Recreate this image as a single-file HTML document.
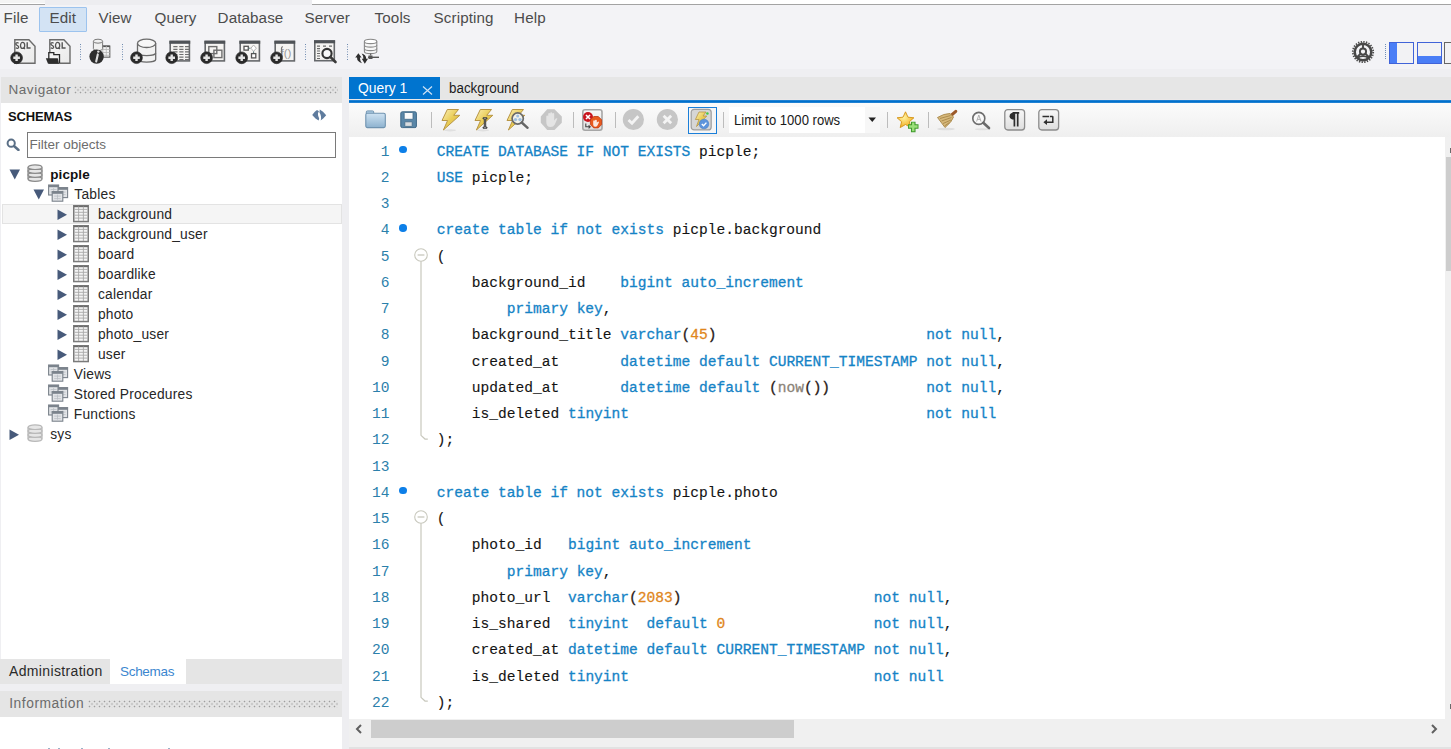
<!DOCTYPE html><html><head><meta charset="utf-8"><style>
html,body{margin:0;padding:0;width:1451px;height:749px;overflow:hidden;background:#f3f3f6;}
body{position:relative;font-family:"Liberation Sans", sans-serif;}
div,svg{position:absolute;}
.t{white-space:pre;}
</style></head><body>
<div style="left:0px;top:0px;width:1451px;height:5px;background:#ffffff"></div>
<div style="left:0px;top:0px;width:45px;height:3px;background:#f4f4f4"></div>
<div style="left:0px;top:4px;width:45px;height:1px;background:#a3a3a3"></div>
<div style="left:45px;top:0px;width:267px;height:5px;background:#ededf0"></div>
<div style="left:312px;top:4px;width:1139px;height:1px;background:#a3a3a3"></div>
<div style="left:0px;top:5px;width:1451px;height:64px;background:#f3f3f6"></div>
<div style="left:39px;top:7px;width:46px;height:23px;background:#d3e3f4;border:1px solid #9cc3ee;border-radius:1px"></div>
<div class="t" style="left:3.6px;top:9.24px;font-size:15.2px;line-height:17.48px;color:#4c4c4c;font-weight:400;letter-spacing:0.1px;font-family:'Liberation Sans', sans-serif;">File</div>
<div class="t" style="left:49.6px;top:9.24px;font-size:15.2px;line-height:17.48px;color:#4c4c4c;font-weight:400;letter-spacing:0.1px;font-family:'Liberation Sans', sans-serif;">Edit</div>
<div class="t" style="left:98.6px;top:9.24px;font-size:15.2px;line-height:17.48px;color:#4c4c4c;font-weight:400;letter-spacing:0.1px;font-family:'Liberation Sans', sans-serif;">View</div>
<div class="t" style="left:154.6px;top:9.24px;font-size:15.2px;line-height:17.48px;color:#4c4c4c;font-weight:400;letter-spacing:0.1px;font-family:'Liberation Sans', sans-serif;">Query</div>
<div class="t" style="left:217.6px;top:9.24px;font-size:15.2px;line-height:17.48px;color:#4c4c4c;font-weight:400;letter-spacing:0.1px;font-family:'Liberation Sans', sans-serif;">Database</div>
<div class="t" style="left:304.6px;top:9.24px;font-size:15.2px;line-height:17.48px;color:#4c4c4c;font-weight:400;letter-spacing:0.1px;font-family:'Liberation Sans', sans-serif;">Server</div>
<div class="t" style="left:374.6px;top:9.24px;font-size:15.2px;line-height:17.48px;color:#4c4c4c;font-weight:400;letter-spacing:0.1px;font-family:'Liberation Sans', sans-serif;">Tools</div>
<div class="t" style="left:433.6px;top:9.24px;font-size:15.2px;line-height:17.48px;color:#4c4c4c;font-weight:400;letter-spacing:0.1px;font-family:'Liberation Sans', sans-serif;">Scripting</div>
<div class="t" style="left:514.1px;top:9.24px;font-size:15.2px;line-height:17.48px;color:#4c4c4c;font-weight:400;letter-spacing:0.1px;font-family:'Liberation Sans', sans-serif;">Help</div>
<div style="left:0px;top:69px;width:1451px;height:8px;background:#efeff2"></div>
<div style="left:0px;top:77px;width:342px;height:26px;background:#e5e5e5"></div>
<div class="t" style="left:8.5px;top:81.78px;font-size:13.5px;line-height:15.52px;color:#6b6b6b;font-weight:400;letter-spacing:0.55px;font-family:'Liberation Sans', sans-serif;">Navigator</div>
<div style="left:74px;top:85.5px;width:264px;height:8px;background:radial-gradient(circle at 1.5px 1.5px,#9e9e9e 0.7px,transparent 1.1px) 0 0/5px 5px,radial-gradient(circle at 1.5px 1.5px,#9e9e9e 0.7px,transparent 1.1px) 2.5px 2.5px/5px 5px"></div>
<div style="left:0px;top:103px;width:342px;height:556px;background:#ffffff"></div>
<div class="t" style="left:8px;top:109.93px;font-size:13px;line-height:14.95px;color:#111;font-weight:700;letter-spacing:-0.15px;font-family:'Liberation Sans', sans-serif;">SCHEMAS</div>
<div style="left:27px;top:132px;width:307px;height:24px;border:1px solid #7a7a7a;background:#fff"></div>
<div class="t" style="left:29.4px;top:137.18px;font-size:13.5px;line-height:15.52px;color:#6d6d6d;font-weight:400;letter-spacing:0px;font-family:'Liberation Sans', sans-serif;">Filter objects</div>
<div style="left:342px;top:77px;width:7px;height:672px;background:#eeeef1"></div>
<div style="left:0px;top:77px;width:1px;height:672px;background:#efeff2"></div>
<div style="left:2px;top:204px;width:340px;height:20px;background:#f5f5f5;border:1px solid #e3e3e3;box-sizing:border-box"></div>
<svg style="left:9px;top:169px" width="12" height="11"><path d="M0.5 0.5 L11 0.5 L5.75 10.5 Z" fill="#475a7a"/></svg>
<svg style="left:27px;top:164px" width="16" height="18"><g fill="#e6e6e6" stroke="#8a8a8a" stroke-width="1.2"><rect x="1" y="3" width="14" height="12" rx="1"/><ellipse cx="8" cy="15" rx="7" ry="2.3"/><ellipse cx="8" cy="11" rx="7" ry="2.3"/><ellipse cx="8" cy="7" rx="7" ry="2.3"/><ellipse cx="8" cy="3.2" rx="7" ry="2.3"/></g></svg>
<div class="t" style="left:50.2px;top:166.78px;font-size:13.5px;line-height:15.52px;color:#111;font-weight:700;letter-spacing:0.1px;font-family:'Liberation Sans', sans-serif;">picple</div>
<svg style="left:33px;top:189px" width="12" height="11"><path d="M0.5 0.5 L11 0.5 L5.75 10.5 Z" fill="#475a7a"/></svg>
<svg style="left:48px;top:184px" width="21" height="19"><rect x="0.6" y="1" width="10" height="10" fill="#e2e4e7" stroke="#7b838c" stroke-width="1.1"/><rect x="0.6" y="1" width="10" height="2.2" fill="#7b838c"/><path d="M2.6 5.5h6M2.6 8h6M5.6 4v5.5" stroke="#b9bec4" stroke-width="0.8"/><rect x="10" y="3.6" width="9.6" height="10" fill="#e2e4e7" stroke="#7b838c" stroke-width="1.1"/><rect x="10" y="3.6" width="9.6" height="2.2" fill="#7b838c"/><path d="M12 8.1h5.6M12 10.6h5.6M14.8 6.6v5.5" stroke="#b9bec4" stroke-width="0.8"/><rect x="4.2" y="7.6" width="10.6" height="9.6" fill="#e2e4e7" stroke="#7b838c" stroke-width="1.1"/><rect x="4.2" y="7.6" width="10.6" height="2.2" fill="#7b838c"/><path d="M6.2 12.1h6.6M6.2 14.6h6.6M9.5 10.6v5.1" stroke="#b9bec4" stroke-width="0.8"/></svg>
<div class="t" style="left:74.3px;top:186.50px;font-size:13.8px;line-height:15.87px;color:#262626;font-weight:400;letter-spacing:0.22px;font-family:'Liberation Sans', sans-serif;">Tables</div>
<svg style="left:57px;top:208.5px" width="11" height="12"><path d="M0.5 0.5 L10 5.75 L0.5 11 Z" fill="#475a7a"/></svg>
<svg style="left:73px;top:204.5px" width="16" height="18"><rect x="0.75" y="0.75" width="14.5" height="15.8" fill="#f4f4f4" stroke="#7a7a7a" stroke-width="1.5"/><path d="M1 1.5h14" stroke="#6a6a6a" stroke-width="1.4"/><path d="M1.5 4.4h13M1.5 7.3h13M1.5 10.2h13M1.5 13.1h13M5.6 1.5v14.5M10.4 1.5v14.5" stroke="#a8a8a8" stroke-width="0.9"/></svg>
<div class="t" style="left:97.9px;top:206.50px;font-size:13.8px;line-height:15.87px;color:#262626;font-weight:400;letter-spacing:0.22px;font-family:'Liberation Sans', sans-serif;">background</div>
<svg style="left:57px;top:228.5px" width="11" height="12"><path d="M0.5 0.5 L10 5.75 L0.5 11 Z" fill="#475a7a"/></svg>
<svg style="left:73px;top:224.5px" width="16" height="18"><rect x="0.75" y="0.75" width="14.5" height="15.8" fill="#f4f4f4" stroke="#7a7a7a" stroke-width="1.5"/><path d="M1 1.5h14" stroke="#6a6a6a" stroke-width="1.4"/><path d="M1.5 4.4h13M1.5 7.3h13M1.5 10.2h13M1.5 13.1h13M5.6 1.5v14.5M10.4 1.5v14.5" stroke="#a8a8a8" stroke-width="0.9"/></svg>
<div class="t" style="left:97.9px;top:226.50px;font-size:13.8px;line-height:15.87px;color:#262626;font-weight:400;letter-spacing:0.22px;font-family:'Liberation Sans', sans-serif;">background_user</div>
<svg style="left:57px;top:248.5px" width="11" height="12"><path d="M0.5 0.5 L10 5.75 L0.5 11 Z" fill="#475a7a"/></svg>
<svg style="left:73px;top:244.5px" width="16" height="18"><rect x="0.75" y="0.75" width="14.5" height="15.8" fill="#f4f4f4" stroke="#7a7a7a" stroke-width="1.5"/><path d="M1 1.5h14" stroke="#6a6a6a" stroke-width="1.4"/><path d="M1.5 4.4h13M1.5 7.3h13M1.5 10.2h13M1.5 13.1h13M5.6 1.5v14.5M10.4 1.5v14.5" stroke="#a8a8a8" stroke-width="0.9"/></svg>
<div class="t" style="left:97.9px;top:246.50px;font-size:13.8px;line-height:15.87px;color:#262626;font-weight:400;letter-spacing:0.22px;font-family:'Liberation Sans', sans-serif;">board</div>
<svg style="left:57px;top:268.5px" width="11" height="12"><path d="M0.5 0.5 L10 5.75 L0.5 11 Z" fill="#475a7a"/></svg>
<svg style="left:73px;top:264.5px" width="16" height="18"><rect x="0.75" y="0.75" width="14.5" height="15.8" fill="#f4f4f4" stroke="#7a7a7a" stroke-width="1.5"/><path d="M1 1.5h14" stroke="#6a6a6a" stroke-width="1.4"/><path d="M1.5 4.4h13M1.5 7.3h13M1.5 10.2h13M1.5 13.1h13M5.6 1.5v14.5M10.4 1.5v14.5" stroke="#a8a8a8" stroke-width="0.9"/></svg>
<div class="t" style="left:97.9px;top:266.50px;font-size:13.8px;line-height:15.87px;color:#262626;font-weight:400;letter-spacing:0.22px;font-family:'Liberation Sans', sans-serif;">boardlike</div>
<svg style="left:57px;top:288.5px" width="11" height="12"><path d="M0.5 0.5 L10 5.75 L0.5 11 Z" fill="#475a7a"/></svg>
<svg style="left:73px;top:284.5px" width="16" height="18"><rect x="0.75" y="0.75" width="14.5" height="15.8" fill="#f4f4f4" stroke="#7a7a7a" stroke-width="1.5"/><path d="M1 1.5h14" stroke="#6a6a6a" stroke-width="1.4"/><path d="M1.5 4.4h13M1.5 7.3h13M1.5 10.2h13M1.5 13.1h13M5.6 1.5v14.5M10.4 1.5v14.5" stroke="#a8a8a8" stroke-width="0.9"/></svg>
<div class="t" style="left:97.9px;top:286.50px;font-size:13.8px;line-height:15.87px;color:#262626;font-weight:400;letter-spacing:0.22px;font-family:'Liberation Sans', sans-serif;">calendar</div>
<svg style="left:57px;top:308.5px" width="11" height="12"><path d="M0.5 0.5 L10 5.75 L0.5 11 Z" fill="#475a7a"/></svg>
<svg style="left:73px;top:304.5px" width="16" height="18"><rect x="0.75" y="0.75" width="14.5" height="15.8" fill="#f4f4f4" stroke="#7a7a7a" stroke-width="1.5"/><path d="M1 1.5h14" stroke="#6a6a6a" stroke-width="1.4"/><path d="M1.5 4.4h13M1.5 7.3h13M1.5 10.2h13M1.5 13.1h13M5.6 1.5v14.5M10.4 1.5v14.5" stroke="#a8a8a8" stroke-width="0.9"/></svg>
<div class="t" style="left:97.9px;top:306.50px;font-size:13.8px;line-height:15.87px;color:#262626;font-weight:400;letter-spacing:0.22px;font-family:'Liberation Sans', sans-serif;">photo</div>
<svg style="left:57px;top:328.5px" width="11" height="12"><path d="M0.5 0.5 L10 5.75 L0.5 11 Z" fill="#475a7a"/></svg>
<svg style="left:73px;top:324.5px" width="16" height="18"><rect x="0.75" y="0.75" width="14.5" height="15.8" fill="#f4f4f4" stroke="#7a7a7a" stroke-width="1.5"/><path d="M1 1.5h14" stroke="#6a6a6a" stroke-width="1.4"/><path d="M1.5 4.4h13M1.5 7.3h13M1.5 10.2h13M1.5 13.1h13M5.6 1.5v14.5M10.4 1.5v14.5" stroke="#a8a8a8" stroke-width="0.9"/></svg>
<div class="t" style="left:97.9px;top:326.50px;font-size:13.8px;line-height:15.87px;color:#262626;font-weight:400;letter-spacing:0.22px;font-family:'Liberation Sans', sans-serif;">photo_user</div>
<svg style="left:57px;top:348.5px" width="11" height="12"><path d="M0.5 0.5 L10 5.75 L0.5 11 Z" fill="#475a7a"/></svg>
<svg style="left:73px;top:344.5px" width="16" height="18"><rect x="0.75" y="0.75" width="14.5" height="15.8" fill="#f4f4f4" stroke="#7a7a7a" stroke-width="1.5"/><path d="M1 1.5h14" stroke="#6a6a6a" stroke-width="1.4"/><path d="M1.5 4.4h13M1.5 7.3h13M1.5 10.2h13M1.5 13.1h13M5.6 1.5v14.5M10.4 1.5v14.5" stroke="#a8a8a8" stroke-width="0.9"/></svg>
<div class="t" style="left:97.9px;top:346.50px;font-size:13.8px;line-height:15.87px;color:#262626;font-weight:400;letter-spacing:0.22px;font-family:'Liberation Sans', sans-serif;">user</div>
<svg style="left:48px;top:364px" width="21" height="19"><rect x="0.6" y="1" width="10" height="10" fill="#e2e4e7" stroke="#7b838c" stroke-width="1.1"/><rect x="0.6" y="1" width="10" height="2.2" fill="#7b838c"/><path d="M2.6 5.5h6M2.6 8h6M5.6 4v5.5" stroke="#b9bec4" stroke-width="0.8"/><rect x="10" y="3.6" width="9.6" height="10" fill="#e2e4e7" stroke="#7b838c" stroke-width="1.1"/><rect x="10" y="3.6" width="9.6" height="2.2" fill="#7b838c"/><path d="M12 8.1h5.6M12 10.6h5.6M14.8 6.6v5.5" stroke="#b9bec4" stroke-width="0.8"/><rect x="4.2" y="7.6" width="10.6" height="9.6" fill="#e2e4e7" stroke="#7b838c" stroke-width="1.1"/><rect x="4.2" y="7.6" width="10.6" height="2.2" fill="#7b838c"/><path d="M6.2 12.1h6.6M6.2 14.6h6.6M9.5 10.6v5.1" stroke="#b9bec4" stroke-width="0.8"/></svg>
<div class="t" style="left:73.8px;top:366.50px;font-size:13.8px;line-height:15.87px;color:#262626;font-weight:400;letter-spacing:0.22px;font-family:'Liberation Sans', sans-serif;">Views</div>
<svg style="left:48px;top:384px" width="21" height="19"><rect x="0.6" y="1" width="10" height="10" fill="#e2e4e7" stroke="#7b838c" stroke-width="1.1"/><rect x="0.6" y="1" width="10" height="2.2" fill="#7b838c"/><path d="M2.6 5.5h6M2.6 8h6M5.6 4v5.5" stroke="#b9bec4" stroke-width="0.8"/><rect x="10" y="3.6" width="9.6" height="10" fill="#e2e4e7" stroke="#7b838c" stroke-width="1.1"/><rect x="10" y="3.6" width="9.6" height="2.2" fill="#7b838c"/><path d="M12 8.1h5.6M12 10.6h5.6M14.8 6.6v5.5" stroke="#b9bec4" stroke-width="0.8"/><rect x="4.2" y="7.6" width="10.6" height="9.6" fill="#e2e4e7" stroke="#7b838c" stroke-width="1.1"/><rect x="4.2" y="7.6" width="10.6" height="2.2" fill="#7b838c"/><path d="M6.2 12.1h6.6M6.2 14.6h6.6M9.5 10.6v5.1" stroke="#b9bec4" stroke-width="0.8"/></svg>
<div class="t" style="left:73.8px;top:386.50px;font-size:13.8px;line-height:15.87px;color:#262626;font-weight:400;letter-spacing:0.22px;font-family:'Liberation Sans', sans-serif;">Stored Procedures</div>
<svg style="left:48px;top:404px" width="21" height="19"><rect x="0.6" y="1" width="10" height="10" fill="#e2e4e7" stroke="#7b838c" stroke-width="1.1"/><rect x="0.6" y="1" width="10" height="2.2" fill="#7b838c"/><path d="M2.6 5.5h6M2.6 8h6M5.6 4v5.5" stroke="#b9bec4" stroke-width="0.8"/><rect x="10" y="3.6" width="9.6" height="10" fill="#e2e4e7" stroke="#7b838c" stroke-width="1.1"/><rect x="10" y="3.6" width="9.6" height="2.2" fill="#7b838c"/><path d="M12 8.1h5.6M12 10.6h5.6M14.8 6.6v5.5" stroke="#b9bec4" stroke-width="0.8"/><rect x="4.2" y="7.6" width="10.6" height="9.6" fill="#e2e4e7" stroke="#7b838c" stroke-width="1.1"/><rect x="4.2" y="7.6" width="10.6" height="2.2" fill="#7b838c"/><path d="M6.2 12.1h6.6M6.2 14.6h6.6M9.5 10.6v5.1" stroke="#b9bec4" stroke-width="0.8"/></svg>
<div class="t" style="left:73.8px;top:406.50px;font-size:13.8px;line-height:15.87px;color:#262626;font-weight:400;letter-spacing:0.22px;font-family:'Liberation Sans', sans-serif;">Functions</div>
<svg style="left:9px;top:428.5px" width="11" height="12"><path d="M0.5 0.5 L10 5.75 L0.5 11 Z" fill="#475a7a"/></svg>
<svg style="left:27px;top:424px" width="16" height="18"><g fill="#e6e6e6" stroke="#b8b8b8" stroke-width="1.2"><rect x="1" y="3" width="14" height="12" rx="1"/><ellipse cx="8" cy="15" rx="7" ry="2.3"/><ellipse cx="8" cy="11" rx="7" ry="2.3"/><ellipse cx="8" cy="7" rx="7" ry="2.3"/><ellipse cx="8" cy="3.2" rx="7" ry="2.3"/></g></svg>
<div class="t" style="left:50.2px;top:426.50px;font-size:13.8px;line-height:15.87px;color:#262626;font-weight:400;letter-spacing:0.22px;font-family:'Liberation Sans', sans-serif;">sys</div>
<svg style="left:6px;top:138px" width="14" height="13"><circle cx="5.2" cy="5.2" r="3.6" fill="none" stroke="#5a6f86" stroke-width="2"/><path d="M8 8 L12.5 12" stroke="#5a6f86" stroke-width="2.4" stroke-linecap="round"/></svg>
<svg style="left:311px;top:109px" width="17" height="13"><path d="M6 1 L8 2.3 Q6.6 4 7 6 Q7.4 8 8.2 9.4 L7.6 11.6 L4.5 9.6 L1.2 6 L3.8 2.8 Z" fill="#5f7c9e"/><path d="M8.8 0.6 L12 2.8 L15.2 6.2 L12.2 9.6 L9.6 11.6 Q10.3 9.6 10 7.6 Q9.6 5.2 8.4 3.6 Z" fill="#5f7c9e"/></svg>
<div style="left:0px;top:659px;width:342px;height:25px;background:#e5e5e5"></div>
<div style="left:110px;top:659px;width:75.5px;height:25px;background:#ffffff"></div>
<div class="t" style="left:9px;top:663.32px;font-size:14px;line-height:16.1px;color:#2a2a2a;font-weight:400;letter-spacing:0.35px;font-family:'Liberation Sans', sans-serif;">Administration</div>
<div class="t" style="left:120px;top:663.78px;font-size:13.5px;line-height:15.52px;color:#3b86cf;font-weight:400;letter-spacing:-0.3px;font-family:'Liberation Sans', sans-serif;">Schemas</div>
<div style="left:0px;top:684px;width:342px;height:7px;background:#efeff2"></div>
<div style="left:0px;top:691px;width:342px;height:26px;background:#e5e5e5"></div>
<div class="t" style="left:9.2px;top:696.00px;font-size:13.8px;line-height:15.87px;color:#6b6b6b;font-weight:400;letter-spacing:0.55px;font-family:'Liberation Sans', sans-serif;">Information</div>
<div style="left:88px;top:699.5px;width:250px;height:8px;background:radial-gradient(circle at 1.5px 1.5px,#9e9e9e 0.7px,transparent 1.1px) 0 0/5px 5px,radial-gradient(circle at 1.5px 1.5px,#9e9e9e 0.7px,transparent 1.1px) 2.5px 2.5px/5px 5px"></div>
<div style="left:0px;top:717px;width:342px;height:32px;background:#ffffff"></div>
<div style="left:349px;top:77px;width:1102px;height:23px;background:#e6e6e6"></div>
<div style="left:349px;top:77px;width:91px;height:26px;background:#0074cf"></div>
<div style="left:349px;top:99px;width:1102px;height:1px;background:#ebe8e8"></div>
<div style="left:349px;top:100px;width:1102px;height:3px;background:linear-gradient(#3b8fd9,#0070cc 35%,#0070cc 65%,#3b8fd9)"></div>
<div class="t" style="left:358px;top:78.66px;font-size:15.4px;line-height:17.71px;color:#ffffff;font-weight:400;letter-spacing:0px;font-family:'Liberation Sans', sans-serif;transform:scaleX(0.9);transform-origin:0 0;">Query 1</div>
<svg style="left:422px;top:86px" width="11" height="9"><path d="M1 0.5 L10 8.5 M10 0.5 L1 8.5" stroke="#cfe3f5" stroke-width="1.2"/></svg>
<div class="t" style="left:449px;top:78.66px;font-size:15.4px;line-height:17.71px;color:#1c1c1c;font-weight:400;letter-spacing:0px;font-family:'Liberation Sans', sans-serif;transform:scaleX(0.87);transform-origin:0 0;">background</div>
<div style="left:349px;top:103px;width:1102px;height:34px;background:linear-gradient(#fbfbfb,#efefef)"></div>
<div style="left:349px;top:137px;width:1096px;height:582px;background:#ffffff"></div>
<div style="left:1445px;top:137px;width:6px;height:582px;background:#f0f0f0"></div>
<div style="left:1446px;top:157px;width:5px;height:114px;background:#cdcdcd"></div>
<div style="left:1449.5px;top:148px;width:1.5px;height:4.5px;background:#6a6a6a"></div>
<div style="left:1449.5px;top:704px;width:1.5px;height:5px;background:#6a6a6a"></div>
<div style="left:349px;top:719px;width:1102px;height:30px;background:#f0f0f0"></div>
<div style="left:371px;top:720px;width:423px;height:18px;background:#cdcdcd"></div>
<svg style="left:355px;top:724px" width="8" height="10"><path d="M6 1 L2 5 L6 9" fill="none" stroke="#606060" stroke-width="2"/></svg>
<svg style="left:1430px;top:724px" width="8" height="10"><path d="M2 1 L6 5 L2 9" fill="none" stroke="#606060" stroke-width="2"/></svg>
<div style="left:349px;top:747px;width:1102px;height:2px;background:#e2e2e2"></div>
<div class="t" style="left:330px;width:59.5px;text-align:right;top:138.54px;height:26.25px;line-height:26.25px;font-family:'Liberation Mono', monospace;font-size:14.57px;color:#2b80ab">1</div>
<div style="left:399.3px;top:145.70px;width:7.5px;height:7.5px;border-radius:50%;background:#0d7fe8"></div>
<div class="t" style="left:436.8px;top:138.54px;height:26.25px;line-height:26.25px;font-family:'Liberation Mono', monospace;font-size:14.57px;-webkit-text-stroke:0.3px currentColor"><span style="color:#1583c6;-webkit-text-stroke:0.3px #1583c6">CREATE DATABASE IF NOT EXISTS</span><span style="color:#141414;-webkit-text-stroke:0.12px #141414"> </span><span style="color:#141414;-webkit-text-stroke:0.12px #141414">picple;</span></div>
<div class="t" style="left:330px;width:59.5px;text-align:right;top:164.79px;height:26.25px;line-height:26.25px;font-family:'Liberation Mono', monospace;font-size:14.57px;color:#2b80ab">2</div>
<div class="t" style="left:436.8px;top:164.79px;height:26.25px;line-height:26.25px;font-family:'Liberation Mono', monospace;font-size:14.57px;-webkit-text-stroke:0.3px currentColor"><span style="color:#1583c6;-webkit-text-stroke:0.3px #1583c6">USE</span><span style="color:#141414;-webkit-text-stroke:0.12px #141414"> </span><span style="color:#141414;-webkit-text-stroke:0.12px #141414">picple;</span></div>
<div class="t" style="left:330px;width:59.5px;text-align:right;top:191.04px;height:26.25px;line-height:26.25px;font-family:'Liberation Mono', monospace;font-size:14.57px;color:#2b80ab">3</div>
<div class="t" style="left:436.8px;top:191.04px;height:26.25px;line-height:26.25px;font-family:'Liberation Mono', monospace;font-size:14.57px;-webkit-text-stroke:0.3px currentColor"></div>
<div class="t" style="left:330px;width:59.5px;text-align:right;top:217.29px;height:26.25px;line-height:26.25px;font-family:'Liberation Mono', monospace;font-size:14.57px;color:#2b80ab">4</div>
<div style="left:399.3px;top:224.45px;width:7.5px;height:7.5px;border-radius:50%;background:#0d7fe8"></div>
<div class="t" style="left:436.8px;top:217.29px;height:26.25px;line-height:26.25px;font-family:'Liberation Mono', monospace;font-size:14.57px;-webkit-text-stroke:0.3px currentColor"><span style="color:#1583c6;-webkit-text-stroke:0.3px #1583c6">create table if not exists</span><span style="color:#141414;-webkit-text-stroke:0.12px #141414"> </span><span style="color:#141414;-webkit-text-stroke:0.12px #141414">picple.background</span></div>
<div class="t" style="left:330px;width:59.5px;text-align:right;top:243.54px;height:26.25px;line-height:26.25px;font-family:'Liberation Mono', monospace;font-size:14.57px;color:#2b80ab">5</div>
<div class="t" style="left:436.8px;top:243.54px;height:26.25px;line-height:26.25px;font-family:'Liberation Mono', monospace;font-size:14.57px;-webkit-text-stroke:0.3px currentColor"><span style="color:#141414;-webkit-text-stroke:0.12px #141414">(</span></div>
<div class="t" style="left:330px;width:59.5px;text-align:right;top:269.79px;height:26.25px;line-height:26.25px;font-family:'Liberation Mono', monospace;font-size:14.57px;color:#2b80ab">6</div>
<div class="t" style="left:436.8px;top:269.79px;height:26.25px;line-height:26.25px;font-family:'Liberation Mono', monospace;font-size:14.57px;-webkit-text-stroke:0.3px currentColor"><span style="color:#141414;-webkit-text-stroke:0.12px #141414">    </span><span style="color:#141414;-webkit-text-stroke:0.12px #141414">background_id</span><span style="color:#141414;-webkit-text-stroke:0.12px #141414">    </span><span style="color:#1583c6;-webkit-text-stroke:0.3px #1583c6">bigint auto_increment</span></div>
<div class="t" style="left:330px;width:59.5px;text-align:right;top:296.04px;height:26.25px;line-height:26.25px;font-family:'Liberation Mono', monospace;font-size:14.57px;color:#2b80ab">7</div>
<div class="t" style="left:436.8px;top:296.04px;height:26.25px;line-height:26.25px;font-family:'Liberation Mono', monospace;font-size:14.57px;-webkit-text-stroke:0.3px currentColor"><span style="color:#141414;-webkit-text-stroke:0.12px #141414">        </span><span style="color:#1583c6;-webkit-text-stroke:0.3px #1583c6">primary key</span><span style="color:#141414;-webkit-text-stroke:0.12px #141414">,</span></div>
<div class="t" style="left:330px;width:59.5px;text-align:right;top:322.29px;height:26.25px;line-height:26.25px;font-family:'Liberation Mono', monospace;font-size:14.57px;color:#2b80ab">8</div>
<div class="t" style="left:436.8px;top:322.29px;height:26.25px;line-height:26.25px;font-family:'Liberation Mono', monospace;font-size:14.57px;-webkit-text-stroke:0.3px currentColor"><span style="color:#141414;-webkit-text-stroke:0.12px #141414">    </span><span style="color:#141414;-webkit-text-stroke:0.12px #141414">background_title</span><span style="color:#141414;-webkit-text-stroke:0.12px #141414"> </span><span style="color:#1583c6;-webkit-text-stroke:0.3px #1583c6">varchar</span><span style="color:#2a2018;-webkit-text-stroke:0.3px #2a2018">(</span><span style="color:#e0861b;-webkit-text-stroke:0.3px #e0861b">45</span><span style="color:#2a2018;-webkit-text-stroke:0.3px #2a2018">)</span><span style="color:#141414;-webkit-text-stroke:0.12px #141414">                        </span><span style="color:#1583c6;-webkit-text-stroke:0.3px #1583c6">not null</span><span style="color:#141414;-webkit-text-stroke:0.12px #141414">,</span></div>
<div class="t" style="left:330px;width:59.5px;text-align:right;top:348.54px;height:26.25px;line-height:26.25px;font-family:'Liberation Mono', monospace;font-size:14.57px;color:#2b80ab">9</div>
<div class="t" style="left:436.8px;top:348.54px;height:26.25px;line-height:26.25px;font-family:'Liberation Mono', monospace;font-size:14.57px;-webkit-text-stroke:0.3px currentColor"><span style="color:#141414;-webkit-text-stroke:0.12px #141414">    </span><span style="color:#141414;-webkit-text-stroke:0.12px #141414">created_at</span><span style="color:#141414;-webkit-text-stroke:0.12px #141414">       </span><span style="color:#1583c6;-webkit-text-stroke:0.3px #1583c6">datetime default CURRENT_TIMESTAMP not null</span><span style="color:#141414;-webkit-text-stroke:0.12px #141414">,</span></div>
<div class="t" style="left:330px;width:59.5px;text-align:right;top:374.79px;height:26.25px;line-height:26.25px;font-family:'Liberation Mono', monospace;font-size:14.57px;color:#2b80ab">10</div>
<div class="t" style="left:436.8px;top:374.79px;height:26.25px;line-height:26.25px;font-family:'Liberation Mono', monospace;font-size:14.57px;-webkit-text-stroke:0.3px currentColor"><span style="color:#141414;-webkit-text-stroke:0.12px #141414">    </span><span style="color:#141414;-webkit-text-stroke:0.12px #141414">updated_at</span><span style="color:#141414;-webkit-text-stroke:0.12px #141414">       </span><span style="color:#1583c6;-webkit-text-stroke:0.3px #1583c6">datetime default</span><span style="color:#141414;-webkit-text-stroke:0.12px #141414"> </span><span style="color:#2a2018;-webkit-text-stroke:0.3px #2a2018">(</span><span style="color:#8c8478;-webkit-text-stroke:0.3px #8c8478">now</span><span style="color:#2a2018;-webkit-text-stroke:0.3px #2a2018">())</span><span style="color:#141414;-webkit-text-stroke:0.12px #141414">           </span><span style="color:#1583c6;-webkit-text-stroke:0.3px #1583c6">not null</span><span style="color:#141414;-webkit-text-stroke:0.12px #141414">,</span></div>
<div class="t" style="left:330px;width:59.5px;text-align:right;top:401.04px;height:26.25px;line-height:26.25px;font-family:'Liberation Mono', monospace;font-size:14.57px;color:#2b80ab">11</div>
<div class="t" style="left:436.8px;top:401.04px;height:26.25px;line-height:26.25px;font-family:'Liberation Mono', monospace;font-size:14.57px;-webkit-text-stroke:0.3px currentColor"><span style="color:#141414;-webkit-text-stroke:0.12px #141414">    </span><span style="color:#141414;-webkit-text-stroke:0.12px #141414">is_deleted</span><span style="color:#141414;-webkit-text-stroke:0.12px #141414"> </span><span style="color:#1583c6;-webkit-text-stroke:0.3px #1583c6">tinyint</span><span style="color:#141414;-webkit-text-stroke:0.12px #141414">                                  </span><span style="color:#1583c6;-webkit-text-stroke:0.3px #1583c6">not null</span></div>
<div class="t" style="left:330px;width:59.5px;text-align:right;top:427.29px;height:26.25px;line-height:26.25px;font-family:'Liberation Mono', monospace;font-size:14.57px;color:#2b80ab">12</div>
<div class="t" style="left:436.8px;top:427.29px;height:26.25px;line-height:26.25px;font-family:'Liberation Mono', monospace;font-size:14.57px;-webkit-text-stroke:0.3px currentColor"><span style="color:#141414;-webkit-text-stroke:0.12px #141414">);</span></div>
<div class="t" style="left:330px;width:59.5px;text-align:right;top:453.54px;height:26.25px;line-height:26.25px;font-family:'Liberation Mono', monospace;font-size:14.57px;color:#2b80ab">13</div>
<div class="t" style="left:436.8px;top:453.54px;height:26.25px;line-height:26.25px;font-family:'Liberation Mono', monospace;font-size:14.57px;-webkit-text-stroke:0.3px currentColor"></div>
<div class="t" style="left:330px;width:59.5px;text-align:right;top:479.79px;height:26.25px;line-height:26.25px;font-family:'Liberation Mono', monospace;font-size:14.57px;color:#2b80ab">14</div>
<div style="left:399.3px;top:486.95px;width:7.5px;height:7.5px;border-radius:50%;background:#0d7fe8"></div>
<div class="t" style="left:436.8px;top:479.79px;height:26.25px;line-height:26.25px;font-family:'Liberation Mono', monospace;font-size:14.57px;-webkit-text-stroke:0.3px currentColor"><span style="color:#1583c6;-webkit-text-stroke:0.3px #1583c6">create table if not exists</span><span style="color:#141414;-webkit-text-stroke:0.12px #141414"> </span><span style="color:#141414;-webkit-text-stroke:0.12px #141414">picple.photo</span></div>
<div class="t" style="left:330px;width:59.5px;text-align:right;top:506.04px;height:26.25px;line-height:26.25px;font-family:'Liberation Mono', monospace;font-size:14.57px;color:#2b80ab">15</div>
<div class="t" style="left:436.8px;top:506.04px;height:26.25px;line-height:26.25px;font-family:'Liberation Mono', monospace;font-size:14.57px;-webkit-text-stroke:0.3px currentColor"><span style="color:#141414;-webkit-text-stroke:0.12px #141414">(</span></div>
<div class="t" style="left:330px;width:59.5px;text-align:right;top:532.29px;height:26.25px;line-height:26.25px;font-family:'Liberation Mono', monospace;font-size:14.57px;color:#2b80ab">16</div>
<div class="t" style="left:436.8px;top:532.29px;height:26.25px;line-height:26.25px;font-family:'Liberation Mono', monospace;font-size:14.57px;-webkit-text-stroke:0.3px currentColor"><span style="color:#141414;-webkit-text-stroke:0.12px #141414">    </span><span style="color:#141414;-webkit-text-stroke:0.12px #141414">photo_id</span><span style="color:#141414;-webkit-text-stroke:0.12px #141414">   </span><span style="color:#1583c6;-webkit-text-stroke:0.3px #1583c6">bigint auto_increment</span></div>
<div class="t" style="left:330px;width:59.5px;text-align:right;top:558.54px;height:26.25px;line-height:26.25px;font-family:'Liberation Mono', monospace;font-size:14.57px;color:#2b80ab">17</div>
<div class="t" style="left:436.8px;top:558.54px;height:26.25px;line-height:26.25px;font-family:'Liberation Mono', monospace;font-size:14.57px;-webkit-text-stroke:0.3px currentColor"><span style="color:#141414;-webkit-text-stroke:0.12px #141414">        </span><span style="color:#1583c6;-webkit-text-stroke:0.3px #1583c6">primary key</span><span style="color:#141414;-webkit-text-stroke:0.12px #141414">,</span></div>
<div class="t" style="left:330px;width:59.5px;text-align:right;top:584.79px;height:26.25px;line-height:26.25px;font-family:'Liberation Mono', monospace;font-size:14.57px;color:#2b80ab">18</div>
<div class="t" style="left:436.8px;top:584.79px;height:26.25px;line-height:26.25px;font-family:'Liberation Mono', monospace;font-size:14.57px;-webkit-text-stroke:0.3px currentColor"><span style="color:#141414;-webkit-text-stroke:0.12px #141414">    </span><span style="color:#141414;-webkit-text-stroke:0.12px #141414">photo_url</span><span style="color:#141414;-webkit-text-stroke:0.12px #141414">  </span><span style="color:#1583c6;-webkit-text-stroke:0.3px #1583c6">varchar</span><span style="color:#2a2018;-webkit-text-stroke:0.3px #2a2018">(</span><span style="color:#e0861b;-webkit-text-stroke:0.3px #e0861b">2083</span><span style="color:#2a2018;-webkit-text-stroke:0.3px #2a2018">)</span><span style="color:#141414;-webkit-text-stroke:0.12px #141414">                      </span><span style="color:#1583c6;-webkit-text-stroke:0.3px #1583c6">not null</span><span style="color:#141414;-webkit-text-stroke:0.12px #141414">,</span></div>
<div class="t" style="left:330px;width:59.5px;text-align:right;top:611.04px;height:26.25px;line-height:26.25px;font-family:'Liberation Mono', monospace;font-size:14.57px;color:#2b80ab">19</div>
<div class="t" style="left:436.8px;top:611.04px;height:26.25px;line-height:26.25px;font-family:'Liberation Mono', monospace;font-size:14.57px;-webkit-text-stroke:0.3px currentColor"><span style="color:#141414;-webkit-text-stroke:0.12px #141414">    </span><span style="color:#141414;-webkit-text-stroke:0.12px #141414">is_shared</span><span style="color:#141414;-webkit-text-stroke:0.12px #141414">  </span><span style="color:#1583c6;-webkit-text-stroke:0.3px #1583c6">tinyint  default</span><span style="color:#141414;-webkit-text-stroke:0.12px #141414"> </span><span style="color:#e0861b;-webkit-text-stroke:0.3px #e0861b">0</span><span style="color:#141414;-webkit-text-stroke:0.12px #141414">                 </span><span style="color:#1583c6;-webkit-text-stroke:0.3px #1583c6">not null</span><span style="color:#141414;-webkit-text-stroke:0.12px #141414">,</span></div>
<div class="t" style="left:330px;width:59.5px;text-align:right;top:637.29px;height:26.25px;line-height:26.25px;font-family:'Liberation Mono', monospace;font-size:14.57px;color:#2b80ab">20</div>
<div class="t" style="left:436.8px;top:637.29px;height:26.25px;line-height:26.25px;font-family:'Liberation Mono', monospace;font-size:14.57px;-webkit-text-stroke:0.3px currentColor"><span style="color:#141414;-webkit-text-stroke:0.12px #141414">    </span><span style="color:#141414;-webkit-text-stroke:0.12px #141414">created_at</span><span style="color:#141414;-webkit-text-stroke:0.12px #141414"> </span><span style="color:#1583c6;-webkit-text-stroke:0.3px #1583c6">datetime default CURRENT_TIMESTAMP not null</span><span style="color:#141414;-webkit-text-stroke:0.12px #141414">,</span></div>
<div class="t" style="left:330px;width:59.5px;text-align:right;top:663.54px;height:26.25px;line-height:26.25px;font-family:'Liberation Mono', monospace;font-size:14.57px;color:#2b80ab">21</div>
<div class="t" style="left:436.8px;top:663.54px;height:26.25px;line-height:26.25px;font-family:'Liberation Mono', monospace;font-size:14.57px;-webkit-text-stroke:0.3px currentColor"><span style="color:#141414;-webkit-text-stroke:0.12px #141414">    </span><span style="color:#141414;-webkit-text-stroke:0.12px #141414">is_deleted</span><span style="color:#141414;-webkit-text-stroke:0.12px #141414"> </span><span style="color:#1583c6;-webkit-text-stroke:0.3px #1583c6">tinyint</span><span style="color:#141414;-webkit-text-stroke:0.12px #141414">                            </span><span style="color:#1583c6;-webkit-text-stroke:0.3px #1583c6">not null</span></div>
<div class="t" style="left:330px;width:59.5px;text-align:right;top:689.79px;height:26.25px;line-height:26.25px;font-family:'Liberation Mono', monospace;font-size:14.57px;color:#2b80ab">22</div>
<div class="t" style="left:436.8px;top:689.79px;height:26.25px;line-height:26.25px;font-family:'Liberation Mono', monospace;font-size:14.57px;-webkit-text-stroke:0.3px currentColor"><span style="color:#141414;-webkit-text-stroke:0.12px #141414">);</span></div>
<svg style="left:413px;top:246.70px" width="16" height="195.05"><circle cx="8" cy="8" r="6.3" fill="#fff" stroke="#c8c8bd" stroke-width="1.1"/><path d="M4.6 8h6.8" stroke="#c8c8bd" stroke-width="1.3"/><path d="M8 14.3 V188.35 L12 192.05 H14.8" fill="none" stroke="#c8c8bd" stroke-width="1.2"/></svg>
<svg style="left:413px;top:509.20px" width="16" height="195.05"><circle cx="8" cy="8" r="6.3" fill="#fff" stroke="#c8c8bd" stroke-width="1.1"/><path d="M4.6 8h6.8" stroke="#c8c8bd" stroke-width="1.3"/><path d="M8 14.3 V188.35 L12 192.05 H14.8" fill="none" stroke="#c8c8bd" stroke-width="1.2"/></svg>
<svg style="left:0;top:0" width="0" height="0"><defs><linearGradient id="dg" x1="0" y1="0" x2="1" y2="1"><stop offset="0" stop-color="#f7f7f7"/><stop offset="1" stop-color="#e9e9e9"/></linearGradient></defs></svg>
<svg style="left:10px;top:38px" width="27" height="28" viewBox="0 0 27 28"><path d="M4.8 1.8 H18.9 L25 8.2 V25.3 H4.8 Z" fill="url(#dg)" stroke="#6b6b6b" stroke-width="1.4"/><path d="M8.6 5.2 Q7.2 4.2 6.2 5 Q5.3 6 6.6 7 L8 8 Q9.2 9.1 8.2 10 Q7.2 10.8 5.8 9.8" fill="none" stroke="#555" stroke-width="1.3"/><ellipse cx="12.6" cy="7.4" rx="2.1" ry="3" fill="none" stroke="#555" stroke-width="1.3"/><path d="M13.5 9.6 L15 11" stroke="#555" stroke-width="1.2"/><path d="M17.2 4.2 V10 H20.6" fill="none" stroke="#555" stroke-width="1.4"/><circle cx="6.6" cy="19.8" r="5.9" fill="#2b2b2b" stroke="#202020" stroke-width="0.6"/><path d="M3.3 19.8h6.6M6.6 16.5v6.6" stroke="#e4e4e4" stroke-width="2.4"/></svg>
<svg style="left:45px;top:38px" width="27" height="28" viewBox="0 0 27 28"><path d="M4.8 1.8 H18.9 L25 8.2 V25.3 H4.8 Z" fill="url(#dg)" stroke="#6b6b6b" stroke-width="1.4"/><path d="M8.6 5.2 Q7.2 4.2 6.2 5 Q5.3 6 6.6 7 L8 8 Q9.2 9.1 8.2 10 Q7.2 10.8 5.8 9.8" fill="none" stroke="#555" stroke-width="1.3"/><ellipse cx="12.6" cy="7.4" rx="2.1" ry="3" fill="none" stroke="#555" stroke-width="1.3"/><path d="M13.5 9.6 L15 11" stroke="#555" stroke-width="1.2"/><path d="M17.2 4.2 V10 H20.6" fill="none" stroke="#555" stroke-width="1.4"/><path d="M3.8 25 V14.6 H8.8 V16.6 H14.5 V25" fill="#f4f4f4" stroke="#2a2a2a" stroke-width="1.3"/><path d="M0.8 20.3 H12.8 L14 25.8 H3 Z" fill="#2e2e2e"/></svg>
<div style="left:79.5px;top:44px;width:1.3px;height:16px;background-image:linear-gradient(#5f7fa8 50%,transparent 50%);background-size:1px 2.5px"></div>
<svg style="left:88px;top:38px" width="24" height="28" viewBox="0 0 24 28"><rect x="10.9" y="8.1" width="10.9" height="11.1" fill="#f2f2f2" stroke="#6d6d6d" stroke-width="1.2"/><path d="M11 8.3h10.8" stroke="#555" stroke-width="1.6"/><path d="M11 11.5h10.8M11 14.5h10.8M11 17.3h10.8M14.8 8v11M18.3 8v11" stroke="#b5b5b5" stroke-width="0.8"/><g fill="#f0f0f0" stroke="#7a7a7a" stroke-width="1"><path d="M5.4 3.2 v7.5 a4.6 2 0 0 0 9.2 0 v-7.5"/><ellipse cx="10" cy="3.2" rx="4.6" ry="2"/></g><circle cx="8.6" cy="18.6" r="7.2" fill="#2e2e2e"/><circle cx="10.3" cy="13.6" r="1.2" fill="#e0e0e0"/><path d="M9.8 16.4 L8.2 23.5" stroke="#e0e0e0" stroke-width="2.1" stroke-linecap="round"/></svg>
<div style="left:122px;top:44px;width:1.3px;height:16px;background-image:linear-gradient(#5f7fa8 50%,transparent 50%);background-size:1px 2.5px"></div>
<svg style="left:129px;top:38px" width="28" height="28" viewBox="0 0 28 28"><g fill="#f2f2f2" stroke="#6a6a6a" stroke-width="1.3"><path d="M8.5 5.3 v16.2 a9.1 2.6 0 0 0 18.2 0 v-16.2"/><path d="M8.5 15 a9.1 2.6 0 0 0 18.2 0" fill="none"/><ellipse cx="17.6" cy="5.3" rx="9.1" ry="4.2" fill="#f7f7f7"/></g><circle cx="7.5" cy="19.7" r="5.9" fill="#2b2b2b" stroke="#202020" stroke-width="0.6"/><path d="M4.2 19.7h6.6M7.5 16.4v6.6" stroke="#e4e4e4" stroke-width="2.4"/></svg>
<svg style="left:164px;top:38px" width="28" height="28" viewBox="0 0 28 28"><rect x="6.2" y="3.5" width="19.2" height="19.4" fill="#f5f4f2" stroke="#66696c" stroke-width="1.6"/><rect x="5.4" y="2.7" width="20.8" height="3.1" fill="#4f5357"/><path d="M9.3 8.6h4.2M9.3 11.3h4.2M9.3 13.9h4.2M9.3 16.5h4.2M9.3 19.2h4.2M9.3 21.5h4.2M15.3 8.6h4.2M15.3 11.3h4.2M15.3 13.9h4.2M15.3 16.5h4.2M15.3 19.2h4.2M15.3 21.5h4.2M21.0 8.6h4.2M21.0 11.3h4.2M21.0 13.9h4.2M21.0 16.5h4.2M21.0 19.2h4.2M21.0 21.5h4.2" stroke="#707070" stroke-width="1.2"/><circle cx="7.7" cy="19.7" r="5.9" fill="#2b2b2b" stroke="#202020" stroke-width="0.6"/><path d="M4.4 19.7h6.6M7.7 16.4v6.6" stroke="#e4e4e4" stroke-width="2.4"/></svg>
<svg style="left:199px;top:38px" width="28" height="28" viewBox="0 0 28 28"><rect x="6.2" y="3.5" width="19.2" height="19.4" fill="#f5f4f2" stroke="#66696c" stroke-width="1.6"/><rect x="5.4" y="2.7" width="20.8" height="3.1" fill="#4f5357"/><rect x="9.8" y="8.6" width="8" height="7" fill="none" stroke="#6e6e6e" stroke-width="1.4"/><rect x="14.9" y="12.2" width="8" height="7.4" fill="none" stroke="#6e6e6e" stroke-width="1.4"/><circle cx="7.6" cy="19.7" r="5.9" fill="#2b2b2b" stroke="#202020" stroke-width="0.6"/><path d="M4.3 19.7h6.6M7.6 16.4v6.6" stroke="#e4e4e4" stroke-width="2.4"/></svg>
<svg style="left:234px;top:38px" width="28" height="28" viewBox="0 0 28 28"><rect x="6.2" y="3.5" width="19.2" height="19.4" fill="#f5f4f2" stroke="#66696c" stroke-width="1.6"/><rect x="5.4" y="2.7" width="20.8" height="3.1" fill="#4f5357"/><rect x="10" y="8.3" width="4.3" height="3.8" fill="#fff" stroke="#555" stroke-width="1.3"/><path d="M14.3 10.2h2.2" stroke="#5a7a7a" stroke-width="1"/><path d="M19.6 7 l2.7 3.2 -2.7 3.2 -2.7 -3.2 z" fill="#fff" stroke="#aaa" stroke-width="0.9"/><path d="M19.6 13.4v2.2" stroke="#5a7a7a" stroke-width="1"/><rect x="17.5" y="15.6" width="4.3" height="4.3" fill="#fff" stroke="#555" stroke-width="1.3"/><circle cx="7.7" cy="19.8" r="5.9" fill="#2b2b2b" stroke="#202020" stroke-width="0.6"/><path d="M4.4 19.8h6.6M7.7 16.5v6.6" stroke="#e4e4e4" stroke-width="2.4"/></svg>
<svg style="left:269px;top:38px" width="28" height="28" viewBox="0 0 28 28"><rect x="6.2" y="3.5" width="19.2" height="19.4" fill="#f5f4f2" stroke="#66696c" stroke-width="1.6"/><rect x="5.4" y="2.7" width="20.8" height="3.1" fill="#4f5357"/><text x="11.4" y="19" font-family="Liberation Sans" font-size="11.5" fill="#9a9a9a" textLength="11" lengthAdjust="spacingAndGlyphs">f()</text><path d="M13.9 8.8 Q12.7 8.5 12.5 10.4 V19" fill="none" stroke="#777" stroke-width="1.2"/><circle cx="7.6" cy="19.8" r="5.9" fill="#2b2b2b" stroke="#202020" stroke-width="0.6"/><path d="M4.3 19.8h6.6M7.6 16.5v6.6" stroke="#e4e4e4" stroke-width="2.4"/></svg>
<div style="left:304.5px;top:44px;width:1.3px;height:16px;background-image:linear-gradient(#5f7fa8 50%,transparent 50%);background-size:1px 2.5px"></div>
<svg style="left:312px;top:38px" width="28" height="28" viewBox="0 0 28 28"><rect x="2.8" y="3.2" width="19.5" height="19.5" fill="#f5f4f2" stroke="#66696c" stroke-width="1.6"/><rect x="2" y="2.2" width="21.1" height="3.1" fill="#4f5357"/><path d="M5 8.2h3M11 8.2h3M17 8.2h3M5 10.6h3M5 13h3M5 15.5h3M5 18h3M5 20.5h3" stroke="#6a6a6a" stroke-width="1.2"/><circle cx="15" cy="15.5" r="4.6" fill="#f8f8f8" stroke="#333" stroke-width="2.1"/><path d="M18.3 18.8 L23.5 24" stroke="#3a3a3a" stroke-width="2.6" stroke-linecap="round"/></svg>
<div style="left:346.5px;top:44px;width:1.3px;height:16px;background-image:linear-gradient(#5f7fa8 50%,transparent 50%);background-size:1px 2.5px"></div>
<svg style="left:353px;top:38px" width="27" height="28" viewBox="0 0 27 28"><g fill="#f6f6f6" stroke="#8a8a8a" stroke-width="1.1"><path d="M11.4 3.4 v10 a6.2 2.2 0 0 0 12.4 0 v-10"/><path d="M11.4 6.9 a6.2 2.2 0 0 0 12.4 0M11.4 10.4 a6.2 2.2 0 0 0 12.4 0" fill="none"/><ellipse cx="17.6" cy="3.4" rx="6.2" ry="2.2" fill="#fff"/></g><path d="M15 19.3 H26" stroke="#555" stroke-width="1.4"/><path d="M15.5 17.5 h4 v3.5 h-4z" fill="#555"/><path d="M17.6 15.5v2" stroke="#666" stroke-width="1.3"/><path d="M2.2 19.6 L5.4 15.2 L8.6 19.6 H6.9 Q6.9 23 9 25.2 Q4 24 4 19.6 Z" fill="#2f2f2f"/><path d="M8.8 20.7 H10.4 Q10.4 17.5 8.6 15.5 Q13 16.5 13.2 20.7 H15 L11.8 25.7 Z" fill="#2f2f2f"/></svg>
<svg style="left:1351px;top:39.5px" width="24" height="24" viewBox="0 0 24 24"><circle cx="12" cy="12" r="10.2" fill="none" stroke="#4a4a4a" stroke-width="1.8" stroke-dasharray="1.35 1.32"/><circle cx="12" cy="12" r="8.3" fill="none" stroke="#484848" stroke-width="2.5"/><circle cx="12" cy="11.6" r="3.1" fill="none" stroke="#484848" stroke-width="1.9"/><path d="M12 4.5V8.5M9.6 13.6L6 17.2M14.4 13.6L18 17.2M6.8 17.6Q12 14.6 17.2 17.6" fill="none" stroke="#484848" stroke-width="1.9"/></svg>
<div style="left:1384.5px;top:44px;width:1.2px;height:16px;background-image:linear-gradient(#6f8fb8 50%,transparent 50%);background-size:1px 2px"></div>
<div style="left:1389px;top:42px;width:23px;height:20px;border:1px solid #4063d8;background:linear-gradient(90deg,#4a7ef6 0,#4a7ef6 7px,#f2f2f4 7px)"></div>
<div style="left:1417px;top:42px;width:23px;height:20px;border:1px solid #4063d8;background:linear-gradient(180deg,#f2f2f4 0,#f2f2f4 13px,#4a7ef6 13px)"></div>
<div style="left:1444px;top:42px;width:10px;height:20px;border:1px solid #666;background:#f2f2f4"></div>
<svg style="left:0;top:0" width="0" height="0"><defs><linearGradient id="fg" x1="0" y1="0" x2="0" y2="1"><stop offset="0" stop-color="#cfe3f3"/><stop offset="1" stop-color="#8db2cf"/></linearGradient><linearGradient id="lg" x1="0" y1="0" x2="1" y2="1"><stop offset="0" stop-color="#fbf0b8"/><stop offset="0.5" stop-color="#e9cc55"/><stop offset="1" stop-color="#d6b23a"/></linearGradient><linearGradient id="bg2" x1="0" y1="0" x2="0" y2="1"><stop offset="0" stop-color="#f8f8f8"/><stop offset="1" stop-color="#dedede"/></linearGradient><radialGradient id="sg" cx="0.4" cy="0.35" r="0.7"><stop offset="0" stop-color="#fff3a0"/><stop offset="1" stop-color="#f0a818"/></radialGradient></defs></svg>
<svg style="left:364px;top:108px" width="24" height="22" viewBox="0 0 24 22"><path d="M2.3 5.5 V4 Q2.3 2.9 3.4 2.9 H8.6 Q9.7 2.9 9.7 4 V5.3" fill="#a9c8e0" stroke="#7397b3" stroke-width="1"/><rect x="1.8" y="5.2" width="19.5" height="14.4" rx="1.6" fill="url(#fg)" stroke="#6f93b0" stroke-width="1.1"/></svg>
<svg style="left:399px;top:108px" width="20" height="22" viewBox="0 0 20 22"><rect x="1.8" y="3.8" width="15.6" height="15.8" rx="1.5" fill="#5a87a8" stroke="#3f6887" stroke-width="1"/><rect x="5.2" y="4.5" width="8.8" height="6.8" rx="0.8" fill="#fafafa" stroke="#3f6887" stroke-width="0.8"/><rect x="5.8" y="13.8" width="7.4" height="4.6" rx="0.6" fill="#d9dde0" stroke="#3f6887" stroke-width="0.8"/></svg>
<div style="left:430.5px;top:112px;width:1px;height:16px;background:#bcbcbc"></div>
<svg style="left:440px;top:108px" width="22" height="24" viewBox="0 0 22 24"><ellipse cx="10" cy="22.3" rx="6" ry="1.1" fill="#000" fill-opacity="0.07"/><path d="M7.3 1.5 H18.5 L13.7 7.3 H19.8 L3.4 22 L7.6 12.5 H2 Z" fill="url(#lg)" stroke="#b89646" stroke-width="1" stroke-linejoin="round"/></svg>
<svg style="left:473px;top:108px" width="22" height="24" viewBox="0 0 22 24"><ellipse cx="10" cy="22.3" rx="6" ry="1.1" fill="#000" fill-opacity="0.07"/><path d="M7.3 1.5 H18.5 L13.7 7.3 H19.8 L3.4 22 L7.6 12.5 H2 Z" fill="url(#lg)" stroke="#b89646" stroke-width="1" stroke-linejoin="round"/><path d="M10 9.8 H14 V10.8 H12.7 V19.2 H14 V20.2 H10 V19.2 H11.3 V10.8 H10 Z" fill="#eee" stroke="#333" stroke-width="1"/></svg>
<svg style="left:505px;top:108px" width="26" height="24" viewBox="0 0 26 24"><path d="M7.3 1.5 H18.5 L13.7 7.3 H19.8 L3.4 22 L7.6 12.5 H2 Z" fill="url(#lg)" stroke="#b89646" stroke-width="1" stroke-linejoin="round"/><circle cx="12.7" cy="10.5" r="5.6" fill="#f2f2ea" stroke="#6a6a6a" stroke-width="1.7"/><circle cx="12.7" cy="7.9" r="1.5" fill="#9fc0e2"/><circle cx="10.5" cy="11.6" r="1.7" fill="#9fc0e2"/><circle cx="15" cy="11.6" r="1.7" fill="#9fc0e2"/><path d="M16.7 14.5 L22.6 19.8" stroke="#666" stroke-width="2.4" stroke-linecap="round"/></svg>
<svg style="left:539px;top:108px" width="24" height="24" viewBox="0 0 24 24"><path d="M8.2 1.2 H15.5 L22.8 8.5 V14.8 L15.5 22 H8.2 L1.8 14.8 V8.5 Z" fill="#c6c6c6"/><path d="M7.3 14 V8.5 Q7.3 7.5 8.2 7.5 Q9.2 7.5 9.2 8.5 V6 Q9.2 5 10.2 5 Q11.2 5 11.2 6 V5.2 Q11.2 4.2 12.2 4.2 Q13.2 4.2 13.2 5.2 V6 Q13.2 5 14.2 5 Q15.2 5 15.2 6 V12.5 L16.8 10.5 Q17.8 9.8 18.4 10.6 L15.8 16.5 Q14.5 19 11.5 19 Q7.3 19 7.3 14 Z" fill="#e4e4e4"/></svg>
<div style="left:573px;top:112px;width:1px;height:16px;background:#bcbcbc"></div>
<svg style="left:581px;top:108px" width="23" height="24" viewBox="0 0 23 24"><rect x="1.8" y="1.8" width="19.2" height="20.4" rx="2.2" fill="url(#bg2)" stroke="#a6a6a6" stroke-width="1.6"/><circle cx="7" cy="9" r="5" fill="#c8141e"/><path d="M5 7l4 4M9 7l-4 4" stroke="#fff" stroke-width="1.6"/><path d="M12.7 8.5 H17.3 L20.6 11.8 V16.6 L17.3 19.9 H12.7 L9.4 16.6 V11.8 Z" fill="#e85a1e" stroke="#c23a10" stroke-width="0.8"/><path d="M12.2 13.2 Q12.2 12.2 13.1 12.2 Q14 12.2 14 13.2 V12.6 Q14 11.7 14.9 11.7 Q15.8 11.7 15.8 12.6 V14.6 L16.9 13.7 Q17.9 13.3 18 14.3 L16.6 17.2 Q15.7 18.7 14.2 18.7 Q12.2 18.7 12.2 16.5 Z" fill="#fbe9e0"/><path d="M4.8 15.5 V18.8 H9 M7.6 17.3 L9.2 18.8 L7.6 20.3" fill="none" stroke="#444" stroke-width="1.1"/></svg>
<div style="left:614.5px;top:112px;width:1px;height:16px;background:#bcbcbc"></div>
<svg style="left:621px;top:108px" width="24" height="24" viewBox="0 0 24 24"><circle cx="12.4" cy="11.5" r="10.6" fill="#c6c6c6"/><path d="M7.5 12 L11 15.3 L17.3 8.3" fill="none" stroke="#f4f4f4" stroke-width="2.8"/></svg>
<svg style="left:656px;top:108px" width="24" height="24" viewBox="0 0 24 24"><circle cx="11.4" cy="11.5" r="10.6" fill="#c6c6c6"/><path d="M7.6 7.7 L15.2 15.3 M15.2 7.7 L7.6 15.3" stroke="#f4f4f4" stroke-width="2.8"/></svg>
<div style="left:688px;top:107px;width:28.5px;height:27px;border:1.6px solid #1b7fd9;background:#f6f6f6;box-sizing:border-box"></div>
<svg style="left:690px;top:108px" width="23" height="24" viewBox="0 0 23 24"><rect x="1.2" y="1.3" width="20" height="20.6" rx="3" fill="#d6d6d6" stroke="#9f9f9f" stroke-width="1.2"/><path d="M9 4 H16 L13 8 H16.8 L6.5 18.5 L9 11.5 H5.4 Z" fill="url(#lg)" stroke="#b89646" stroke-width="0.8"/><circle cx="14" cy="16" r="4.8" fill="#5d94dc" stroke="#4a7fc4" stroke-width="0.6"/><path d="M11.8 16 L13.6 17.8 L16.4 14.6" fill="none" stroke="#fff" stroke-width="1.4"/><circle cx="17.4" cy="5.5" r="1.3" fill="#44c844"/></svg>
<div style="left:723px;top:112px;width:1px;height:16px;background:#bcbcbc"></div>
<div style="left:729px;top:107px;width:151px;height:26px;background:#ffffff"></div>
<div style="left:865px;top:107px;width:15px;height:26px;background:#f7f7f7"></div>
<div class="t" style="left:734px;top:111.46px;font-size:15.4px;line-height:17.71px;color:#1a1a1a;font-weight:400;letter-spacing:0px;font-family:'Liberation Sans', sans-serif;transform:scaleX(0.85);transform-origin:0 0;">Limit to 1000 rows</div>
<svg style="left:868px;top:117px" width="9" height="6" viewBox="0 0 9 6"><path d="M0.5 0.5 H8 L4.25 5 Z" fill="#222"/></svg>
<div style="left:887px;top:112px;width:1px;height:16px;background:#bcbcbc"></div>
<svg style="left:895px;top:108px" width="25" height="25" viewBox="0 0 25 25"><path d="M10.5 3.8 L13 9.2 L18.9 9.8 L14.4 13.7 L15.8 19.6 L10.5 16.5 L5.2 19.6 L6.6 13.7 L2.1 9.8 L8 9.2 Z" fill="url(#sg)" stroke="#d49212" stroke-width="0.9" stroke-linejoin="round"/><path d="M13 18.5 h10.5 M18.25 13.7 v10.5" stroke="#3f9a2c" stroke-width="4.6"/><path d="M13.9 18.5 h8.7 M18.25 14.6 v8.7" stroke="#9be07a" stroke-width="2.4"/></svg>
<div style="left:928px;top:112px;width:1px;height:16px;background:#bcbcbc"></div>
<svg style="left:935px;top:108px" width="25" height="24" viewBox="0 0 25 24"><ellipse cx="11" cy="21" rx="9" ry="1.3" fill="#000" fill-opacity="0.08"/><path d="M16 7.5 L20.8 3.3" stroke="#9c5a2a" stroke-width="3" stroke-linecap="round"/><path d="M2.5 9.5 Q9 5.5 15 5.5 L18.5 9 Q17 14 10 19.5 Z" fill="#d6b87a" stroke="#a8874a" stroke-width="0.9"/><path d="M5 10.5 L15.5 7.5M6.5 13 L16.5 9.5M8 15.5 L16 12M9.5 18 L14.5 14.5" stroke="#a8874a" stroke-width="0.9"/></svg>
<svg style="left:970px;top:108px" width="22" height="24" viewBox="0 0 22 24"><ellipse cx="12" cy="21.3" rx="7" ry="1" fill="#000" fill-opacity="0.07"/><circle cx="8.8" cy="10.4" r="6" fill="#fafafa" stroke="#6d6d6d" stroke-width="1.6"/><path d="M6.6 13.5 L8.8 7 L11 13.5 M7.4 11.4h2.8" fill="none" stroke="#a8a8a8" stroke-width="0.9"/><path d="M13.3 14.8 L19 20" stroke="#6a6a6a" stroke-width="2.6" stroke-linecap="round"/></svg>
<svg style="left:1003px;top:108px" width="23" height="24" viewBox="0 0 23 24"><rect x="1.8" y="1.6" width="19.8" height="20.4" rx="3" fill="url(#bg2)" stroke="#8c8c8c" stroke-width="1.3"/><path d="M9.6 4.8 H16.2 M11.4 4.8 V18.5 M14.7 4.8 V18.5" stroke="#2e2e2e" stroke-width="1.7"/><path d="M11.4 4.6 Q6.6 4.6 6.6 8.2 Q6.6 11.6 11.4 11.6 Z" fill="#2e2e2e"/></svg>
<svg style="left:1037px;top:108px" width="23" height="24" viewBox="0 0 23 24"><rect x="1.8" y="1.6" width="19.8" height="20.4" rx="3" fill="url(#bg2)" stroke="#8c8c8c" stroke-width="1.3"/><path d="M5.5 8.5 H12.2 M15.8 8.2 V14.2 H9.5" fill="none" stroke="#2e2e2e" stroke-width="1.5"/><path d="M10 11.3 L6.4 14.2 L10 17 Z" fill="#2e2e2e"/><path d="M13 8.5 H15.8" stroke="#2e2e2e" stroke-width="1.5"/></svg>
<div style="left:48px;top:748px;width:2px;height:1px;background:#9ab4c8"></div>
<div style="left:58px;top:748px;width:2px;height:1px;background:#9ab4c8"></div>
<div style="left:81px;top:748px;width:2px;height:1px;background:#9ab4c8"></div>
<div style="left:108px;top:748px;width:2px;height:1px;background:#9ab4c8"></div>
<div style="left:168px;top:748px;width:2px;height:1px;background:#9ab4c8"></div>
</body></html>
